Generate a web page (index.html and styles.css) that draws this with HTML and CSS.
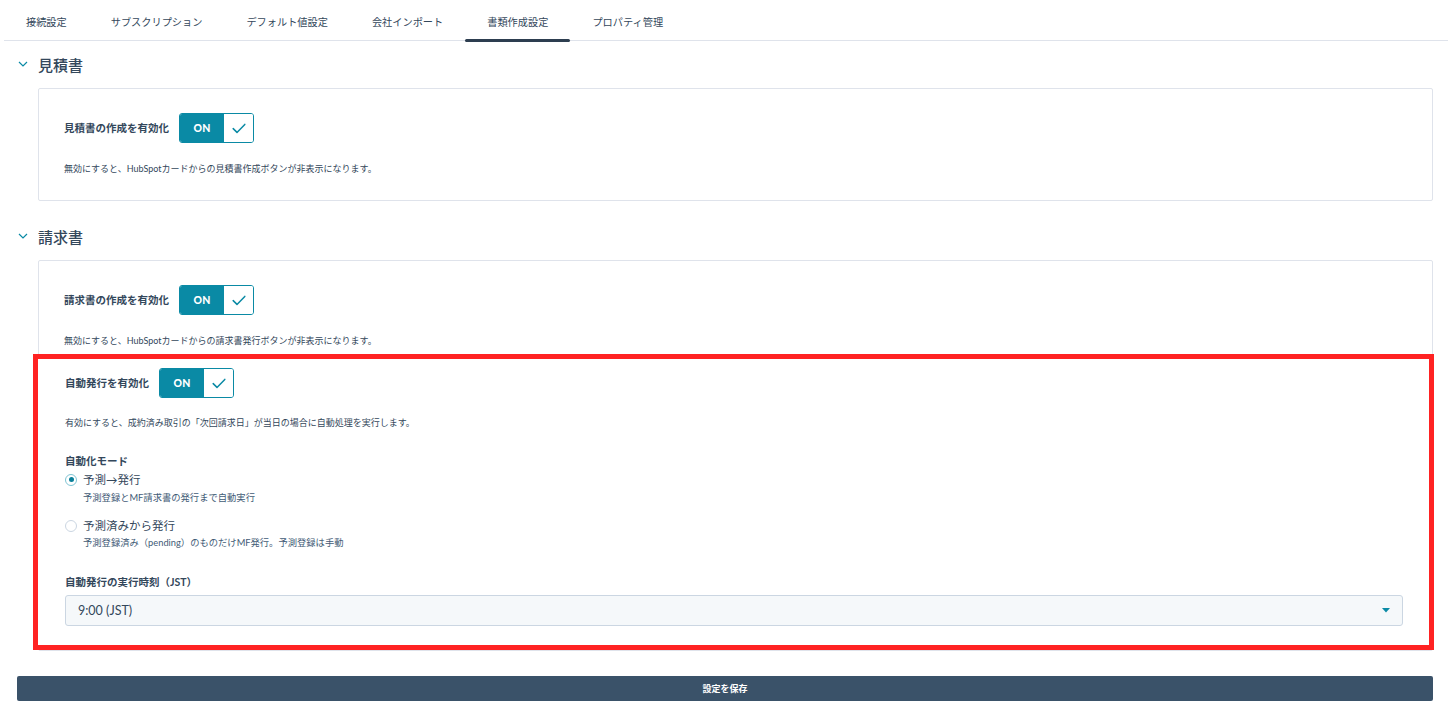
FILE: index.html
```
<!DOCTYPE html>
<html lang="ja">
<head>
    <meta charset="UTF-8">
    <meta name="viewport" content="width=device-width, initial-scale=1.0">
    <title>書類作成設定</title>
    <link rel="stylesheet" href="styles.css">
</head>
<body>
    <nav class="tabs">
        <a class="tab" href="#">接続設定</a>
        <a class="tab" href="#">サブスクリプション</a>
        <a class="tab" href="#">デフォルト値設定</a>
        <a class="tab" href="#">会社インポート</a>
        <a class="tab active" href="#">書類作成設定</a>
        <a class="tab" href="#">プロパティ管理</a>
    </nav>

    <div class="page">
        <!-- 見積書 -->
        <section class="section">
            <div class="section-head">
                <svg class="chevron" width="10" height="6" viewBox="0 0 10 6"><path d="M1 1 L5 5 L9 1" /></svg>
                <span>見積書</span>
            </div>
            <div class="card pad">
                <div class="field-row">
                    <span class="label">見積書の作成を有効化</span>
                    <span class="toggle">
                        <span class="toggle-on">ON</span>
                        <span class="toggle-check"><svg width="14" height="11" viewBox="0 0 14 11"><path d="M1.2 5.6 L5 9.4 L12.8 1.4" /></svg></span>
                    </span>
                </div>
                <p class="desc">無効にすると、HubSpotカードからの見積書作成ボタンが非表示になります。</p>
            </div>
        </section>

        <!-- 請求書 -->
        <section class="section">
            <div class="section-head">
                <svg class="chevron" width="10" height="6" viewBox="0 0 10 6"><path d="M1 1 L5 5 L9 1" /></svg>
                <span>請求書</span>
            </div>
            <div class="card">
                <div class="card-body">
                    <div class="field-row">
                        <span class="label">請求書の作成を有効化</span>
                        <span class="toggle">
                            <span class="toggle-on">ON</span>
                            <span class="toggle-check"><svg width="14" height="11" viewBox="0 0 14 11"><path d="M1.2 5.6 L5 9.4 L12.8 1.4" /></svg></span>
                        </span>
                    </div>
                    <p class="desc">無効にすると、HubSpotカードからの請求書発行ボタンが非表示になります。</p>
                </div>

                <div class="highlight">
                    <div class="field-row">
                        <span class="label">自動発行を有効化</span>
                        <span class="toggle">
                            <span class="toggle-on">ON</span>
                            <span class="toggle-check"><svg width="14" height="11" viewBox="0 0 14 11"><path d="M1.2 5.6 L5 9.4 L12.8 1.4" /></svg></span>
                        </span>
                    </div>
                    <p class="desc desc-auto">有効にすると、成約済み取引の「次回請求日」が当日の場合に自動処理を実行します。</p>

                    <div class="label mode-label">自動化モード</div>
                    <div class="radio-row first">
                        <span class="radio checked"></span>
                        <span class="radio-text">予測→発行</span>
                    </div>
                    <div class="radio-sub">予測登録とMF請求書の発行まで自動実行</div>
                    <div class="radio-row second">
                        <span class="radio"></span>
                        <span class="radio-text">予測済みから発行</span>
                    </div>
                    <div class="radio-sub sub-second">予測登録済み（pending）のものだけMF発行。予測登録は手動</div>

                    <div class="label time-label">自動発行の実行時刻（JST）</div>
                    <div class="select">
                        <span>9:00 (JST)</span>
                        <svg width="8" height="5" viewBox="0 0 8 5"><path d="M0 0 H8 L4 4.5 Z" /></svg>
                    </div>
                </div>
            </div>
        </section>

        <button class="save-btn">設定を保存</button>
    </div>
</body>
</html>
```

FILE: styles.css
```
*{padding:0;margin:0;box-sizing:border-box;}
body{font-family:Lato,"Noto Sans CJK JP",sans-serif;color:#33475b;background:#fff;}

/* tabs */
.tabs{display:flex;height:41px;margin:0 3px 0 4px;border-bottom:1px solid #dfe3eb;}
.tab{position:relative;display:flex;align-items:center;padding:3px 22px 0;font-size:10.2px;color:#33475b;text-decoration:none;white-space:nowrap;}
.tab.active::after{content:"";position:absolute;left:0;right:0;bottom:-2px;height:3px;border-radius:2px;background:#2d3e50;}

.page{padding:13px 18px 19px 17px;}

/* sections */
.section + .section{margin-top:25px;}
.section-head{display:flex;align-items:center;gap:10px;height:20px;margin-bottom:14px;padding-left:1px;font-size:15px;font-weight:500;color:#33475b;}
.chevron path{fill:none;stroke:#0a8aa5;stroke-width:1.2;}

.card{margin-left:21px;border:1px solid #dfe3eb;border-radius:2px;background:#fff;}
.card.pad{padding:24px 25px;}
.card-body{padding:24px 25px 0;}

.field-row{display:flex;align-items:center;gap:10px;height:30px;}
.label{font-size:10.5px;font-weight:700;line-height:15px;color:#33475b;white-space:nowrap;}

/* toggle */
.toggle{display:inline-flex;height:30px;border:1px solid #0a8aa5;border-radius:3px;overflow:hidden;}
.toggle-on{display:flex;align-items:center;justify-content:center;width:44px;background:#0a8aa5;color:#fff;font-size:10.5px;font-weight:900;letter-spacing:.3px;}
.toggle-check{display:flex;align-items:center;justify-content:center;width:29px;background:#fff;}
.toggle-check path{fill:none;stroke:#0a8aa5;stroke-width:1.5;stroke-linecap:round;stroke-linejoin:round;}

.desc{margin-top:19px;font-size:9px;line-height:14px;color:#33475b;white-space:nowrap;}

/* auto issue block */
.highlight{margin:6px -2px 0 -6px;padding:9px 26px 19px 27px;border:5px solid #ff2222;background:#fff;}
.desc-auto{margin-top:18px;}
.mode-label{margin-top:24px;}

.radio-row{display:flex;align-items:center;gap:6px;height:15px;}
.radio-row.first{margin-top:3px;}
.radio-row.second{margin-top:14px;}
.radio{position:relative;width:12px;height:12px;border:1px solid #cbd6e2;border-radius:50%;background:#fff;}
.radio.checked{border-color:#7fc5d4;}
.radio.checked::after{content:"";position:absolute;left:2.5px;top:2.5px;width:5px;height:5px;border-radius:50%;background:#0a7f99;}
.radio-text{font-size:11.5px;line-height:15px;color:#33475b;}
.radio-sub{margin-top:4px;padding-left:18px;font-size:9.3px;line-height:13px;color:#425b76;white-space:nowrap;}
.radio-sub.sub-second{margin-top:3px;}

.time-label{margin-top:26px;}
.select{display:flex;align-items:center;justify-content:space-between;height:31px;margin-top:5px;padding:0 12px;border:1px solid #cbd6e2;border-radius:3px;background:#f5f8fa;font-size:12.5px;color:#33475b;}
.select path{fill:#0a8aa5;}

/* save */
.save-btn{display:block;width:100%;height:25px;margin-top:25px;padding-bottom:1px;border:0;border-radius:2px;background:#3a5269;color:#fff;font-family:Lato,"Noto Sans CJK JP",sans-serif;font-size:9px;font-weight:700;}
```
